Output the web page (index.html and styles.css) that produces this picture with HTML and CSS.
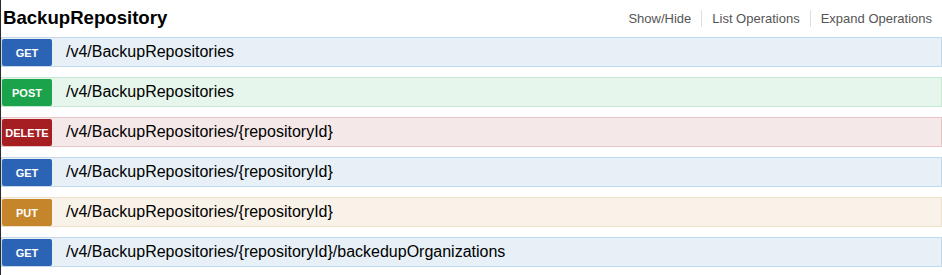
FILE: index.html
```html
<!DOCTYPE html>
<html lang="en">
<head>
  <meta charset="UTF-8">
  <title>BackupRepository</title>
  <link rel="stylesheet" href="styles.css">
</head>
<body>

  <!-- Resource heading -->
  <div class="resource-head">
    <h2>BackupRepository</h2>
    <ul class="options">
      <li><a href="#">Show/Hide</a></li>
      <li><a href="#">List Operations</a></li>
      <li><a href="#">Expand Operations</a></li>
    </ul>
  </div>

  <!-- Operations -->
  <ul class="endpoints">
    <li class="op get"><span class="verb">GET</span><span class="path">/v4/BackupRepositories</span></li>
    <li class="op post"><span class="verb">POST</span><span class="path">/v4/BackupRepositories</span></li>
    <li class="op delete"><span class="verb">DELETE</span><span class="path">/v4/BackupRepositories/{repositoryId}</span></li>
    <li class="op get"><span class="verb">GET</span><span class="path">/v4/BackupRepositories/{repositoryId}</span></li>
    <li class="op put"><span class="verb">PUT</span><span class="path">/v4/BackupRepositories/{repositoryId}</span></li>
    <li class="op get"><span class="verb">GET</span><span class="path">/v4/BackupRepositories/{repositoryId}/backedupOrganizations</span></li>
  </ul>

</body>
</html>
```

FILE: styles.css
```css
/* Global */
body {
  margin: 0;
  padding: 0;
  font-family: 'Liberation Sans', Arial, sans-serif;
  background-color: #fff;
  color: #000;
  border-left: 1px solid #2a2a2a;
  min-height: 275px;
  box-sizing: border-box;
}

/* Heading */
.resource-head {
  display: flex;
  justify-content: space-between;
  align-items: center;
  height: 37px;
  padding: 0 10px 0 2px;
}

.resource-head h2 {
  margin: 0 0 1px 0;
  font-size: 18.6px;
  font-weight: bold;
}

.options {
  list-style: none;
  margin: 0;
  padding: 0;
  display: flex;
  align-items: center;
}

.options li {
  padding: 0 10px;
  border-left: 1px solid #ddd;
  line-height: 16px;
}

.options li:first-child {
  border-left: none;
}

.options li:last-child {
  padding-right: 0;
}

.options a {
  color: #555;
  text-decoration: none;
  font-size: 13px;
}

/* Operations */
.endpoints {
  list-style: none;
  margin: 0;
  padding: 0;
  display: flex;
  flex-direction: column;
  gap: 10px;
}

.op {
  display: flex;
  align-items: center;
  height: 28px;
  border: 1px solid;
}

.verb {
  width: 50px;
  height: 27px;
  margin-top: 1px;
  display: flex;
  align-items: center;
  justify-content: center;
  color: #fff;
  font-size: 11px;
  font-weight: bold;
  border-radius: 2px;
}

.path {
  margin-left: 14px;
  font-size: 16px;
}

.get { background-color: #e7f0f7; border-color: #c3d9ec; }
.get .verb { background-color: #2b63b5; }

.post { background-color: #e7f6ec; border-color: #c3e8d1; }
.post .verb { background-color: #1aa34a; }

.delete { background-color: #f5e8e8; border-color: #e8c6c7; }
.delete .verb { background-color: #a41e22; }

.put { background-color: #f9f2e9; border-color: #f0e0ca; }
.put .verb { background-color: #c5862b; }
```
